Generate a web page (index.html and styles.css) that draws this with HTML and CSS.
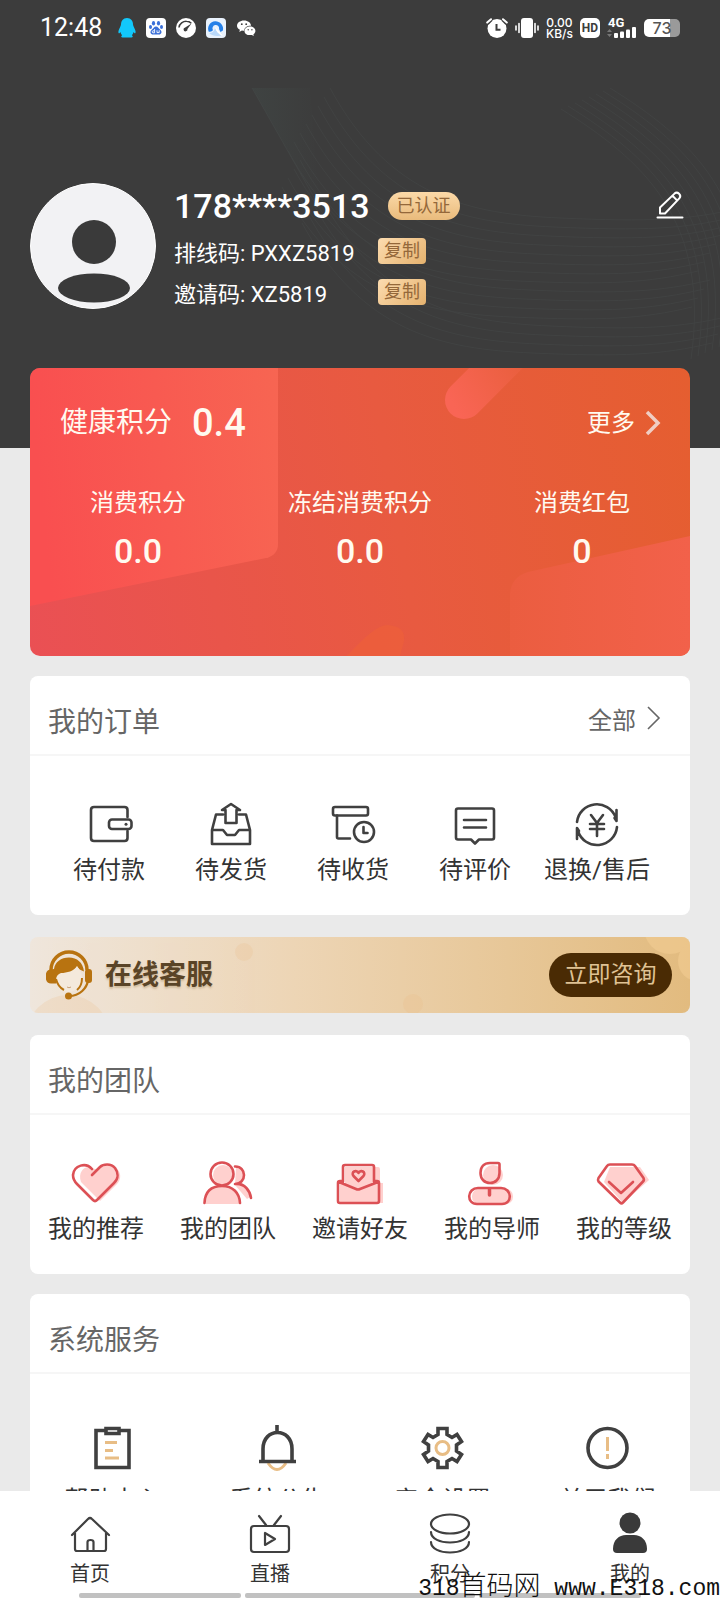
FILE: index.html
```html
<!DOCTYPE html>
<html lang="zh-CN">
<head>
<meta charset="utf-8">
<meta name="viewport" content="width=device-width, initial-scale=1">
<title>我的</title>
<link rel="stylesheet" href="styles.css">
</head>
<body>
<div class="app">
  <main class="content">
    <header class="hero">
      <svg class="hero-waves" viewBox="0 0 720 360" preserveAspectRatio="none" aria-hidden="true">
        <defs>
          <linearGradient id="beam" x1="0" x2="1"><stop offset="0" stop-color="#44504d"/><stop offset="1" stop-color="#3c3c3c"/></linearGradient>
          <g id="w1"><path d="M330 0C390 110 470 126 560 130S690 132 740 120"/></g>
          <g id="w4"><use href="#w1"/><use href="#w1" x="-6" y="9"/><use href="#w1" x="-12" y="18"/><use href="#w1" x="-18" y="27"/></g>
          <g id="v1"><path d="M570 0C650 50 720 110 700 250"/></g>
          <g id="v4"><use href="#v1"/><use href="#v1" x="-7" y="3"/><use href="#v1" x="-14" y="6"/><use href="#v1" x="-21" y="9"/></g>
        </defs>
        <path class="hero-beam" fill="url(#beam)" d="M252 0L320 120L310 0Z"/>
        <g class="hero-lines">
          <use href="#w4"/><use href="#w4" x="-24" y="36"/><use href="#w4" x="-30" y="72"/><use href="#w4" x="-10" y="108"/>
          <use href="#v4" x="40"/><use href="#v4" x="12" y="12"/>
          <path d="M252 0L320 120"/>
        </g>
      </svg>

      <div class="status">
        <span class="clock">12:48</span>
        <svg width="18" height="20" viewBox="0 0 18 20"><path fill="#12c8fb" d="M9 0C5 0 3 3 3 6.500C3 8 1 10.500 .5 13c-.3 2 .2 2.600 1 2.200L2.400 14c.3 1.300.9 2.300 1.700 3.200-1.400.8-1 2.300.5 2.300h8.800c1.500 0 1.900-1.500.5-2.300.8-.9 1.400-1.900 1.700-3.200l.9 1.200c.8.4 1.300-.2 1-2.200C17 10.500 15 8 15 6.500 15 3 13 0 9 0Z"/></svg>
        <svg width="20" height="20" viewBox="0 0 20 20"><rect width="20" height="20" rx="4" fill="#fff"/><g fill="#3a6fd8"><ellipse cx="7.500" cy="5.300" rx="1.600" ry="2.200"/><ellipse cx="12.500" cy="5.300" rx="1.600" ry="2.200"/><ellipse cx="4.500" cy="9" rx="1.500" ry="2"/><ellipse cx="15.500" cy="9" rx="1.500" ry="2"/><path d="M10 8.500c-2 0-2.500 2-4.500 3.500-2 2-.8 4.500 1.500 4.500h6c2.300 0 3.500-2.500 1.500-4.500-2-1.500-2.500-3.500-4.500-3.500Z"/></g><path d="M8.600 11v3.800h-1.600c-1 0-1-2 0-2h1.400M11 12.300v2.300h2.200v-2.300" fill="none" stroke="#fff" stroke-width=".9"/></svg>
        <svg width="20" height="20" viewBox="0 0 20 20"><circle cx="10" cy="10" r="10" fill="#fff"/><path d="M3 9.500C3.500 5.500 7 3.200 10.500 3.300c2 0 3.600.8 4.800 2" fill="none" stroke="#3c3c3c" stroke-width="1.600"/><path d="M15.500 5.500l-4 5.500a2 2 0 1 1-2.300-1.600Z" fill="#3c3c3c"/></svg>
        <svg width="20" height="20" viewBox="0 0 20 20"><rect width="20" height="20" rx="4" fill="#e9f2fd"/><path d="M2.600 13.500a7.500 7.500 0 1 1 14.300-1L14.500 14 13 11a3.300 3.300 0 1 0-6 1C6 13.500 4.500 14 2.600 13.500Z" fill="#2580e8"/><path d="M3 15c3 0 5-1 6-5 2 2 6 4 8 7-5 2-11 1-14-2Z" fill="#b9d9fb"/><path d="M9 9l8 8-1 1c-3-2-6-4-7-9Z" fill="#fff"/></svg>
        <svg width="20" height="20" viewBox="0 0 20 20"><path fill="#fff" d="M8 2.500c4 0 7 2.300 7 5.200-4-.1-7 2-6.800 5.100-.8 0-1.600-.1-2.300-.3L3.300 14l.6-2.200C2 10.800 1 9.400 1 7.700 1 4.800 4 2.500 8 2.500Z"/><path fill="#fff" d="M14 8.600c3 0 5.400 1.900 5.400 4.300 0 1.300-.8 2.500-2 3.300l.4 1.700-2-1c-4 .9-7.300-1-7.300-4 0-2.400 2.500-4.300 5.500-4.300Z"/><g fill="#3c3c3c"><circle cx="5.800" cy="6.200" r=".9"/><circle cx="10.200" cy="6.200" r=".9"/><circle cx="12.200" cy="11.800" r=".7"/><circle cx="15.900" cy="11.800" r=".7"/></g></svg>
        <div class="system-state">
          <svg width="22" height="20" viewBox="0 0 22 20"><circle cx="11" cy="10.500" r="9.500" fill="#fff"/><path d="M1 5L5 1.200M21 5L17 1.200" stroke="#3c3c3c" stroke-width="4.500"/><path d="M1.200 4.600L5 1.200M20.800 4.600L17 1.200" stroke="#fff" stroke-width="2" stroke-linecap="round"/><path d="M10.500 6v5.700h4" fill="none" stroke="#3c3c3c" stroke-width="2"/></svg>
          <svg width="24" height="20" viewBox="0 0 24 20"><rect x="6" width="12" height="20" rx="3" fill="#fff"/><path d="M1 8v4M4 5.500v9M20 5.500v9M23 8v4" stroke="#fff" stroke-width="1.600" stroke-linecap="round"/></svg>
          <span class="speed"><span>0.00</span><span>KB/s</span></span>
          <span class="hd">HD</span>
          <span class="signal"><span class="net">4G</span>
            <svg width="30" height="20" viewBox="0 0 30 20"><g fill="#fff"><rect x="7" y="15" width="4" height="5" rx="1"/><rect x="13" y="13.500" width="4" height="6.500" rx="1"/><rect x="19" y="11.500" width="4" height="8.500" rx="1"/><rect x="25" y="9" width="4" height="11" rx="1"/></g><path d="M0 14l2.500-3L5 14ZM0 16l2.500 3L5 16Z" fill="#777"/></svg>
          </span>
          <span class="battery">73</span>
        </div>
      </div>

      <section class="profile">
        <svg class="avatar" viewBox="0 0 126 126" role="img" aria-label="头像"><circle cx="63" cy="63" r="62.500" fill="#f2f2f4" stroke="#fff"/><circle cx="64" cy="59" r="22" fill="#3a3a3a"/><ellipse cx="64" cy="105" rx="36" ry="14.500" fill="#3a3a3a"/></svg>
        <div class="who">
          <div class="who-name"><h1 class="phone">178****3513</h1><span class="verified">已认证</span></div>
          <div class="who-row"><span class="code">排线码: PXXZ5819</span><button class="copy" type="button">复制</button></div>
          <div class="who-row"><span class="code">邀请码: XZ5819</span><button class="copy" type="button">复制</button></div>
        </div>
        <button class="edit" type="button" aria-label="编辑"><svg width="28" height="30" viewBox="0 0 28 30" fill="none" stroke="#fff" stroke-width="2" stroke-linejoin="round" stroke-linecap="round"><path d="M4 23.500V17.500L18.500 3.600c3-2.600 7.600 1.600 4.800 4.800L9 23.500ZM16.500 5.800l4.800 4.800M1.500 27.500h25"/></svg></button>
      </section>
    </header>

    <div class="cards">
      <section class="points">
        <svg class="points-bg" viewBox="0 0 660 288" preserveAspectRatio="none" aria-hidden="true">
          <defs>
            <linearGradient id="ga" x1="0" x2="1" y1=".1" y2="0"><stop offset="0" stop-color="#f94f50"/><stop offset="1" stop-color="#f76552"/></linearGradient>
            <linearGradient id="gb" gradientUnits="userSpaceOnUse" x1="425" y1="40" x2="490" y2="0"><stop offset="0" stop-color="#f96555"/><stop offset="1" stop-color="#ea5f3e"/></linearGradient>
            <linearGradient id="gc" x1="0" x2="1"><stop offset="0" stop-color="#eb5d40"/><stop offset="1" stop-color="#f2614a"/></linearGradient>
          </defs>
          <path fill="url(#ga)" d="M0 0H248V176Q248 187 236 190L0 238Z"/>
          <path d="M434 32L500 -34" stroke="url(#gb)" stroke-width="38" stroke-linecap="round"/>
          <path fill="url(#gc)" d="M480 288V226Q481 209 498 204L660 168V288Z"/>
          <path fill="#ee6038" opacity=".6" d="M317 288Q345 257 357 257Q376 258 374 273L370 288Z"/>
        </svg>
        <div class="points-head">
          <span class="points-title">健康积分</span><strong class="points-total">0.4</strong>
          <a class="more" href="#">更多<svg width="16" height="28" viewBox="0 0 16 28" fill="none" stroke="#f0cdc3" stroke-width="3.500"><path d="M2 3l11 11L2 25"/></svg></a>
        </div>
        <dl class="stats">
          <div><dt>消费积分</dt><dd>0.0</dd></div>
          <div><dt>冻结消费积分</dt><dd>0.0</dd></div>
          <div><dt>消费红包</dt><dd>0</dd></div>
        </dl>
      </section>

      <section class="panel">
        <div class="panel-head"><h2>我的订单</h2><a class="all" href="#">全部<svg width="16" height="28" viewBox="0 0 16 28" fill="none" stroke="#666" stroke-width="1.600"><path d="M2 3l11 11L2 25"/></svg></a></div>
        <nav class="grid orders">
          <a href="#"><svg viewBox="0 0 48 48" class="ic"><path d="M42.500 17V10q0-3-3-3H9q-3 0-3 3v28q0 3 3 3h30.500q3 0 3-3v-7"/><rect x="24" y="19.500" width="22.500" height="9.500" rx="3"/><circle cx="41" cy="24.200" r="1.500" class="dot"/></svg>待付款</a>
          <a href="#"><svg viewBox="0 0 48 48" class="ic"><path d="M16 14.500H9L5 30v14h38V30L39 14.500h-7M5 30h11l4 5h8l4-5h11M18.500 23V10h-3.500l9-6 9 6h-3.500v13Z"/></svg>待发货</a>
          <a href="#"><svg viewBox="0 0 48 48" class="ic"><rect x="4" y="7" width="35" height="8.500" rx="2"/><path d="M8 15.500V37q0 1.500 1.500 1.500H21"/><circle cx="35" cy="32" r="10"/><path d="M34.500 27v6h4"/></svg>待收货</a>
          <a href="#"><svg viewBox="0 0 48 48" class="ic"><path d="M7 8.500h34q2 0 2 2v27q0 2-2 2H28l-4 4-4-4H7q-2 0-2-2v-27q0-2 2-2ZM13 20h22M13 27.500h22"/></svg>待评价</a>
          <a href="#"><svg viewBox="0 0 48 48" class="ic"><path d="M4 22A20 20 0 0 1 42.500 17M44 27A20 20 0 0 1 5 31M43.500 10v11l-2-3M4 39V28l2 3M18 15L24 23l6-8M24 23v13M17 24h14M17 29h14"/></svg>退换/售后</a>
        </nav>
      </section>

      <section class="service">
        <svg class="service-bg" viewBox="0 0 660 76" preserveAspectRatio="none" aria-hidden="true"><g fill="#e9b983" opacity=".2"><circle cx="214" cy="15" r="9"/><circle cx="383" cy="67" r="10"/><circle cx="38" cy="100" r="42"/></g><g fill="#f5cf95" opacity=".5"><circle cx="640" cy="-9" r="26"/><circle cx="668" cy="24" r="20"/></g></svg>
        <svg class="agent" width="48" height="50" viewBox="0 0 48 50"><path d="M6 20a18 18 0 0 1 36 0" fill="none" stroke="#b87310" stroke-width="3.500"/><path d="M9 19C10 12 16 7.500 24 7.500s14 5 15 14c-3-1-6-3-7-5-4 7-12 8-17 9l-4 8H6q-4 0-5-4v-6q1-4 5-4Z" fill="#b87310"/><path d="M11 29c.5-3 2-5 5-6 6 0 13-2 16-7 3 4 5 8 5 12 0 7-5 13-13 14-8-1-12-6-13-13Z" fill="#f4e9dc"/><path d="M11 29q2 8 8 11M37 28q0 8-5 12" stroke="#b87310" stroke-width="2" fill="none"/><rect x="40" y="19" width="7" height="14" rx="3" fill="#b87310"/><path d="M43 30c-1 8-8 16-19 16" stroke="#b87310" stroke-width="2.200" fill="none"/><circle cx="23.500" cy="46" r="3.500" fill="#b87310"/><path d="M22 37q2 1.500 4 0" stroke="#c9a27a" fill="none"/></svg>
        <h2>在线客服</h2>
        <button class="ask" type="button">立即咨询</button>
      </section>

      <section class="panel">
        <div class="panel-head"><h2>我的团队</h2></div>
        <nav class="grid team">
          <a href="#"><svg viewBox="0 0 48 48" class="ic red"><path class="tint" d="M28 42L9 23C6 14 11 8 17 8l9 3c6-7 17-6 20 0 4 5 2 11-1 14Z"/><path d="M20 10C14 3 2 6 1 16c0 4 1 6 4 9L21 41q2 2 4 0L42 24c5-5 4-11 1-15-4-5-12-4-15-1l-8 8"/></svg>我的推荐</a>
          <a href="#"><svg viewBox="1 0 48 48" class="ic red"><circle cx="20" cy="16" r="10" class="tint"/><path class="tint" d="M3 45c0-14 6-18 17-18s17 6 17 18Z"/><path class="tint" d="M33 8c12 1 10 15 1 18 8 0 12 5 13 12l-3 2-12-14Z"/><circle cx="19" cy="15" r="11.500"/><path d="M1.500 44C2 33 8 27 19 27s17.500 7 18 17M32 7.500C44 7 44 25 32 25c10-1 15 7 16 14"/></svg>我的团队</a>
          <a href="#"><svg viewBox="1 0 48 48" class="ic red"><path class="tint" d="M10 8h33q2 0 2 2v14h3v20H5V25l5-1Z"/><path d="M8 23V8q0-2 2-2h27q2 0 2 2v15M8 22H5q-2 0-2 2v18q0 2 2 2h37q2 0 2-2V24q0-2-2-2h-3M4 23l17 7q2 1 4 0l18-7M23.500 22L18.500 17c-3-4 3-7 5-3 2-4 8-1 5 3Z"/></svg>邀请好友</a>
          <a href="#"><svg viewBox="2 0 48 48" class="ic red"><circle cx="27" cy="16" r="10" class="tint"/><rect x="6" y="30" width="41" height="15" rx="7" class="tint"/><path d="M24 4h8q1.500 0 1.500 1.500V14c0 6-4 10-9.500 10s-9.500-4-9.500-10S18 4 24 4ZM12 29h23c11 0 12 16 1 16H11C0 45 1 29 12 29Z"/><path d="M23.500 30v6" stroke-width="3.500"/></svg>我的导师</a>
          <a href="#"><svg viewBox="2 0 48 48" class="ic red"><path class="tint" d="M12 8h30l9 13-26 23L6 23Z"/><path d="M12 5.500h22q2 0 3 1.500l8.500 12q1 2-.5 3.500L25 43.500q-1.500 1.500-3 0L.5 22.500q-1-1.500 0-3.500L9 7q1-1.500 3-1.500ZM11 23l12 11 12-11"/></svg>我的等级</a>
        </nav>
      </section>

      <section class="panel">
        <div class="panel-head"><h2>系统服务</h2></div>
        <nav class="grid system">
          <a href="#"><svg viewBox="1 0 48 48" class="ic thick"><path d="M17 8.500H8v37h33v-37h-9"/><path d="M18 6.500h13v5H18Z"/><path class="gold" d="M17 20.500h12M17 28.500h8M17 36h14"/></svg>帮助中心</a>
          <a href="#"><svg viewBox="1 0 48 48" class="ic thick"><path class="gold" d="M15 41q9 13 18 0"/><path d="M24 3v8M10 38V27C10 5 39 5 39 27v11M6 39.500h37"/></svg>系统公告</a>
          <a href="#"><svg viewBox="1 0 48 48" class="ic thick"><path d="M20 6.500h9v6l5 3 5-3 4.500 7-5 3.500v6l5 3.500-4.500 7-5-3-5 3v6h-9v-6l-5-3-5 3-4.500-7 5-3.500v-6l-5-3.500 4.500-7 5 3 5-3Z"/><circle cx="24.500" cy="26" r="6.500" class="gold"/></svg>安全设置</a>
          <a href="#"><svg viewBox="1 0 48 48" class="ic thick"><circle cx="24.500" cy="26" r="19.500"/><path class="gold" d="M24.500 15v14M24.500 32v5"/></svg>关于我们</a>
        </nav>
      </section>
    </div>
  </main>

  <nav class="tabs">
    <a href="#"><svg viewBox="0 0 44 44" class="ic tab"><path d="M4 25L20 9q2-2 4 0l17 16M7 23v16q0 2 2 2h27q2 0 2-2V23M19.500 41V32q0-2 3-2t3 2v9"/></svg>首页</a>
    <a href="#"><svg viewBox="0 0 44 44" class="ic tab"><rect x="3" y="16" width="38" height="26" rx="3"/><path d="M11 6l7 9M33 6l-7 9M17 23v12l10-6Z"/></svg>直播</a>
    <a href="#"><svg viewBox="0 0 44 44" class="ic tab"><ellipse cx="22" cy="14" rx="19" ry="9.500"/><path d="M3 22c0 14 38 14 38 0M3 32c0 14 38 14 38 0"/></svg>积分</a>
    <a href="#" aria-current="page"><svg viewBox="0 0 44 44" class="ic tab solid"><circle cx="22" cy="13" r="10.500"/><path d="M5 39c0-9 6-14 13-14h8c7 0 13 5 13 14q0 4-4 4H9q-4 0-4-4Z"/></svg>我的</a>
    <div class="handles" aria-hidden="true"><i></i><i class="mid"></i><i></i></div>
    <p class="mark"><span>318</span>首码网<span> www.E318.com</span></p>
  </nav>
</div>
</body>
</html>
```
FILE: styles.css
```css
* { box-sizing: border-box; margin: 0; padding: 0; }
body { background: #eaeaea; color: #333; font-family: Roboto, "Noto Sans CJK SC", sans-serif; font-size: 24px; }
a { color: inherit; text-decoration: none; }
button { border: 0; font: inherit; cursor: pointer; }
svg { display: block; flex: none; }

.app { display: flex; flex-direction: column; height: 100vh; }
.content { flex: 1; min-height: 0; overflow-y: auto; scrollbar-width: none; }

/* dark header */
.hero { position: relative; background: #3c3c3c; color: #fff; padding-bottom: 136px; }
.hero-waves { position: absolute; left: 0; top: 88px; width: 100%; height: 360px; }
.hero-lines { fill: none; stroke: #5a6463; stroke-width: 1; opacity: .16; }
.hero-beam { opacity: .35; }

.status { position: relative; display: flex; align-items: center; height: 56px; padding: 0 40px; gap: 10px; }
.clock { margin-right: 6px; font-size: 25px; line-height: 30px; }
.system-state { display: flex; align-items: center; gap: 7px; margin-left: auto; }
.speed { display: flex; flex-direction: column; align-items: center; font: 500 12px/11px Inter, sans-serif; }
.hd { width: 20px; border-radius: 5px; background: #fff; color: #3c3c3c; font: 700 12px/20px Roboto, sans-serif; text-align: center; }
.signal { position: relative; }
.net { position: absolute; left: 1px; top: -2px; font: 700 13px/13px Roboto, sans-serif; }
.battery { width: 36px; height: 18px; border-radius: 5px; background: linear-gradient(90deg, #fff 72%, #9a9a9a 72%); color: #555; font: 500 16px/19px Inter, sans-serif; text-align: center; }

.profile { position: relative; display: flex; gap: 18px; padding: 126px 36px 0 30px; }
.avatar { width: 126px; height: 126px; margin-top: 1px; }
.who { flex: 1; }
.who-name { display: flex; align-items: center; gap: 18px; height: 48px; }
.phone { font-size: 34px; font-weight: 500; line-height: 44px; }
.verified { width: 72px; border-radius: 14px; background: linear-gradient(#fbd9a8, #e9bb7c); color: #94683a; font-size: 18px; line-height: 28px; text-align: center; }
.who-row { display: flex; align-items: center; height: 41px; font-size: 22px; }
.code { width: 204px; white-space: nowrap; }
.copy { width: 48px; height: 26px; border-radius: 4px; background: linear-gradient(135deg, #fcdcb0, #e5b26e); color: #94683a; font-size: 18px; line-height: 26px; }
.edit { align-self: flex-start; margin-top: 8px; background: none; }

.cards { position: relative; display: flex; flex-direction: column; gap: 20px; margin-top: -80px; padding: 0 30px; }

/* points card */
.points { position: relative; height: 288px; border-radius: 10px; overflow: hidden; background: linear-gradient(80deg, #ea5054, #e85a40 55%, #e55e30); color: #fffaf0; }
.points-bg { position: absolute; inset: 0; width: 100%; height: 100%; }
.points-head { position: relative; display: flex; align-items: center; gap: 20px; padding: 32px 29px 0 30px; line-height: 46px; }
.points-title { font-size: 28px; }
.points-total { font-size: 38px; font-weight: 500; }
.more, .all { display: flex; align-items: center; gap: 10px; margin-left: auto; }
.stats { position: relative; display: grid; grid-template-columns: repeat(3, 1fr); margin: 0 -3px; padding-top: 37px; text-align: center; }
.stats dt { line-height: 40px; }
.stats dd { font-size: 34px; font-weight: 500; line-height: 56px; }

/* white panels */
.panel { border-radius: 8px; background: #fff; }
.panel-head { display: flex; align-items: center; height: 80px; padding: 6px 28px 0 18px; border-bottom: 2px solid #f6f6f6; color: #666; }
.panel-head h2 { margin-top: 10px; font-size: 28px; font-weight: 400; line-height: 40px; }
.grid { display: grid; grid-template-columns: repeat(5, 1fr); padding: 44px 0 27px; }
.grid a { display: flex; flex-direction: column; align-items: center; gap: 4px; line-height: 36px; white-space: nowrap; }
.orders { padding-left: 18px; padding-right: 32px; }
.system { grid-template-columns: repeat(4, 1fr); padding-top: 48px; }
.system a { gap: 12px; }
.ic { width: 48px; height: 48px; overflow: visible; fill: none; stroke: #404040; stroke-width: 2.6; stroke-linejoin: round; stroke-linecap: round; }
.ic .dot { fill: #404040; stroke: none; }
.red { stroke: #dc5055; }
.red .tint { fill: #ffd0ce; stroke: none; }
.thick { stroke-width: 3.6; stroke-linejoin: miter; stroke-linecap: butt; }
.gold { stroke: #e8bd85; stroke-width: 3; }

/* customer service banner */
.service { position: relative; display: flex; align-items: center; height: 76px; margin: 2px 0; padding: 0 18px 0 15px; border-radius: 8px; overflow: hidden; background: linear-gradient(90deg, #efe6dc, #edd5b5 40%, #e2bb7f); }
.service-bg { position: absolute; inset: 0; width: 100%; height: 100%; }
.agent { position: relative; }
.service h2 { position: relative; flex: 1; margin-left: 12px; color: #5a4427; font-size: 27px; font-weight: 700; line-height: 40px; text-shadow: 0 2px 2px #d0bb9c; }
.ask { position: relative; width: 123px; height: 44px; border-radius: 22px; background: #4a2b04; color: #dfc294; font-size: 23px; line-height: 44px; }

/* bottom tabs */
.tabs { position: relative; display: grid; grid-template-columns: repeat(4, 1fr); height: 109px; padding-top: 19px; background: #fff; font-size: 20px; }
.tabs a { display: flex; flex-direction: column; align-items: center; gap: 6px; line-height: 28px; }
.tab { width: 44px; height: 44px; stroke-width: 2.2; }
.solid { fill: #3a3a3a; stroke: none; }
.handles { position: absolute; left: 11%; right: 11%; bottom: 2px; display: flex; gap: 4px; }
.handles i { flex: 162; height: 5px; border-radius: 2px; background: #c1c1c1; }
.handles .mid { flex: 230; }
.mark { position: absolute; right: 0; bottom: -4px; color: #111; font-size: 27px; font-weight: 300; line-height: 30px; white-space: pre; }
.mark span { font-family: "Liberation Mono", monospace; font-size: 23px; }
```
